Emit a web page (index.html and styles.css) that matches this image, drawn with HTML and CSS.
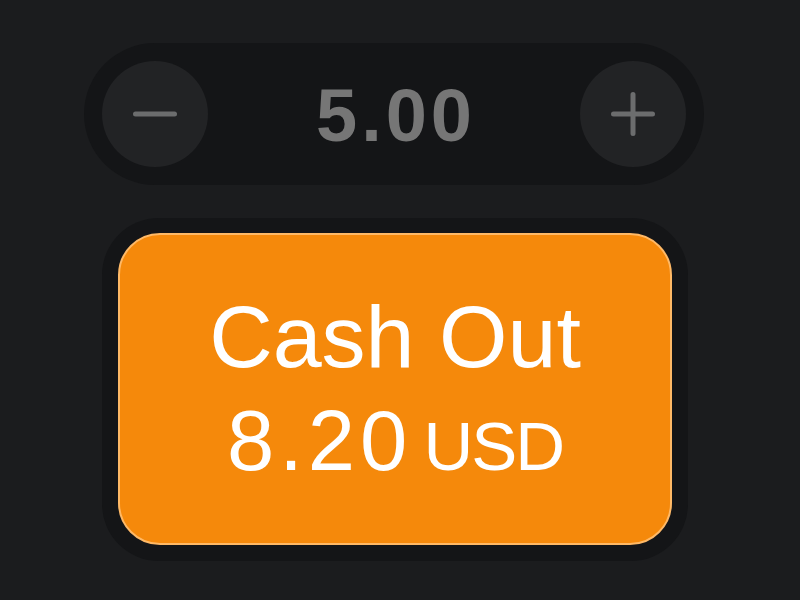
FILE: index.html
```html
<!DOCTYPE html>
<html lang="en">
<head>
<meta charset="utf-8">
<title>Cash Out</title>
<link rel="stylesheet" href="styles.css">
</head>
<body>
<main class="panel">
  <div class="stepper">
    <button class="step-btn" aria-label="Decrease">
      <svg width="44" height="44" viewBox="0 0 44 44"><path d="M2.5 22H41.5" /></svg>
    </button>
    <span class="stake">5.00</span>
    <button class="step-btn" aria-label="Increase">
      <svg width="44" height="44" viewBox="0 0 44 44"><path d="M2.5 22H41.5M22 2.5V41.5" /></svg>
    </button>
  </div>
  <div class="cashout-wrap">
    <button class="cashout">
      <span class="line title">Cash Out</span>
      <span class="line value"><span class="amount">8.20</span><span class="currency">USD</span></span>
    </button>
  </div>
</main>
</body>
</html>
```
FILE: styles.css
```css
html, body {
  margin: 0;
  padding: 0;
  background: #1b1c1e;
  height: 100%;
}

body {
  font-family: "Liberation Sans", Arial, sans-serif;
}

.panel {
  display: flex;
  flex-direction: column;
  align-items: flex-start;
  padding-top: 43px;
  margin-left: 84px;
  width: 620px;
}

.stepper {
  box-sizing: border-box;
  width: 620px;
  height: 142px;
  padding: 18px;
  border-radius: 71px;
  background: #141517;
  display: flex;
  align-items: center;
  justify-content: space-between;
}

.step-btn {
  width: 106px;
  height: 106px;
  border: none;
  padding: 0;
  border-radius: 50%;
  background: #222325;
  display: flex;
  align-items: center;
  justify-content: center;
}

.step-btn svg path {
  stroke: #6c6d6e;
  stroke-width: 5;
  stroke-linecap: round;
  fill: none;
}

.stake {
  font-weight: 700;
  font-size: 74px;
  letter-spacing: 4px;
  margin-right: -4px;
  margin-top: 4px;
  color: #767676;
  line-height: 1;
}

.cashout-wrap {
  box-sizing: border-box;
  margin-top: 33px;
  margin-left: 18px;
  width: 586px;
  padding: 15px 16px 16px;
  border-radius: 57px;
  background: #141517;
}

.cashout {
  box-sizing: border-box;
  width: 554px;
  height: 312px;
  border: 2px solid #ffb966;
  border-radius: 42px;
  background: #f5890b;
  color: #ffffff;
  font-family: "Liberation Sans", Arial, sans-serif;
  display: flex;
  flex-direction: column;
  align-items: center;
  justify-content: center;
  padding: 0;
}

.line {
  display: block;
  white-space: nowrap;
  line-height: 104px;
}

.title {
  font-size: 88px;
}

.value {
  font-size: 85px;
}

.amount {
  letter-spacing: 5px;
}

.currency {
  font-size: 69px;
  letter-spacing: -2px;
  line-height: 1;
  margin-left: 11px;
}
```
